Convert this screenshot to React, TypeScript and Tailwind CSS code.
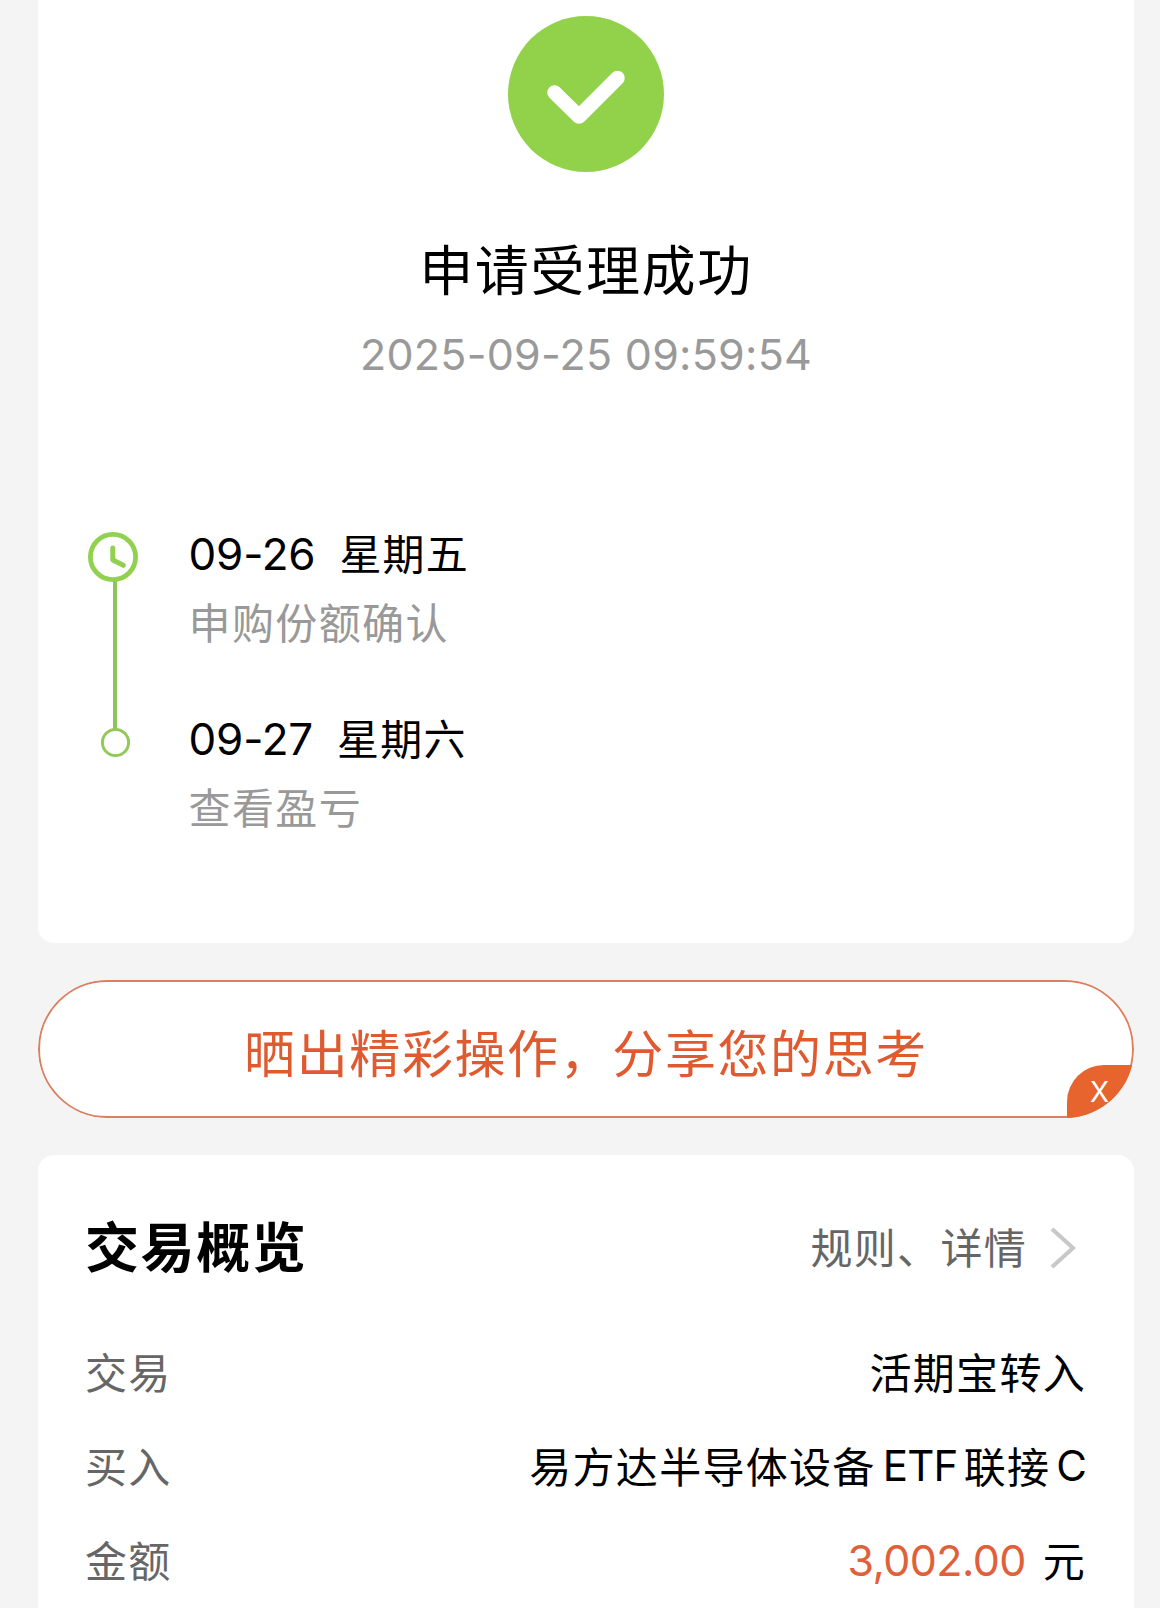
type Step = {
  date: string;
  weekday: string;
  label: string;
};

const STEPS: Step[] = [
  { date: "09-26", weekday: "星期五", label: "申购份额确认" },
  { date: "09-27", weekday: "星期六", label: "查看盈亏" },
];

function SuccessIcon() {
  return (
    <svg width="156" height="156" viewBox="0 0 156 156" fill="none">
      <circle cx="78" cy="78" r="78" fill="#92d24a" />
      <path d="M46.5 76.5L71 100.5L109.5 62" stroke="#fff" strokeWidth="14.5" strokeLinecap="round" strokeLinejoin="round" />
    </svg>
  );
}

function Timeline() {
  return (
    <svg width="52" height="228" viewBox="0 0 52 228" fill="none">
      <path d="M27 49V197" stroke="#8fc458" strokeWidth="4" />
      <circle cx="25" cy="25" r="22.6" stroke="#92d050" strokeWidth="4.8" />
      <path d="M24.8 16V28L35.3 33.3" stroke="#92d050" strokeWidth="5" strokeLinecap="round" strokeLinejoin="round" />
      <circle cx="27.5" cy="210.5" r="13.1" stroke="#92c95a" strokeWidth="3" />
    </svg>
  );
}

function StepItem({ step }: { step: Step }) {
  return (
    <div className="h-[185px]">
      <div className="flex h-[68px] items-center text-black">
        <span className="text-[44px] tracking-[-0.2px]">{step.date}</span>
        <span className="ml-[24px] pt-[2px] text-[42px] tracking-[1.2px]">{step.weekday}</span>
      </div>
      <div className="flex h-[68px] items-center pt-[3px] text-[42px] tracking-[1.4px] text-[#999]">{step.label}</div>
    </div>
  );
}

function Row({ label, children }: { label: string; children: React.ReactNode }) {
  return (
    <div className="flex h-[94px] items-center justify-between text-[42px] tracking-[1.3px]">
      <span className="text-[#666]">{label}</span>
      <div className="flex items-center text-black">{children}</div>
    </div>
  );
}

export default function App() {
  return (
    <div className="h-[1608px] w-[1160px] overflow-hidden bg-[#f4f4f4] pr-[26px] pl-[38px] font-['Inter','Noto_Sans_CJK_SC',sans-serif] leading-none whitespace-nowrap">
      {/* Result */}
      <section className="flex h-[943px] flex-col items-center rounded-b-[16px] bg-white pt-[16px]">
        <SuccessIcon />
        <h1 className="mt-[66px] flex h-[68px] items-center text-[54px] tracking-[1.6px] text-black">申请受理成功</h1>
        <p className="mt-[14px] flex h-[68px] items-center text-[43px] tracking-[0.25px] text-[#999]">2025-09-25 09:59:54</p>
        <div className="mt-[132px] flex w-full pl-[50px]">
          <div className="pt-[12px]">
            <Timeline />
          </div>
          <div className="ml-[48.5px]">
            {STEPS.map(step => (
              <StepItem key={step.date} step={step} />
            ))}
          </div>
        </div>
      </section>

      {/* Share */}
      <div className="relative mt-[37px] h-[138px] overflow-hidden rounded-full">
        <button className="flex h-full w-full items-center justify-center rounded-full border-2 border-[#dd7f5c] bg-white pt-[10px] text-[51px] tracking-[1.6px] text-[#e05a30]">
          晒出精彩操作，分享您的思考
        </button>
        <button className="absolute right-0 bottom-0 flex h-[53px] w-[67px] items-center rounded-tl-[37px] bg-[#e8642f] pl-[23px] text-[28px] text-white">
          X
        </button>
      </div>

      {/* Overview */}
      <section className="mt-[37px] h-[500px] rounded-t-[16px] bg-white pr-[48px] pl-[47px] pt-[47px]">
        <div className="flex h-[94px] items-center justify-between">
          <h2 className="text-[54px] font-bold tracking-[1.6px] text-black">交易概览</h2>
          <div className="flex items-center text-[42px] tracking-[1.3px] text-[#666]">
            规则、详情
            <svg className="-mt-[2px] mr-[9px] ml-[22px]" width="28" height="42" viewBox="0 0 28 42" fill="none">
              <path d="M3 2L24 21L3 40" stroke="#c8c8c8" strokeWidth="4" />
            </svg>
          </div>
        </div>
        <div className="mt-[31px]">
          <Row label="交易">活期宝转入</Row>
          <Row label="买入">
            易方达半导体设备
            <span className="mr-[6px] ml-[7px] -mt-[4px] tracking-[-0.7px]">ETF</span>
            联接
            <span className="-mr-px ml-[6px] -mt-[4px] tracking-normal">C</span>
          </Row>
          <Row label="金额">
            <span className="-mt-[4px] text-[43px] tracking-[-0.6px] text-[#e0603a]">3,002.00</span>
            <span className="ml-[17px]">元</span>
          </Row>
        </div>
      </section>
    </div>
  );
}
